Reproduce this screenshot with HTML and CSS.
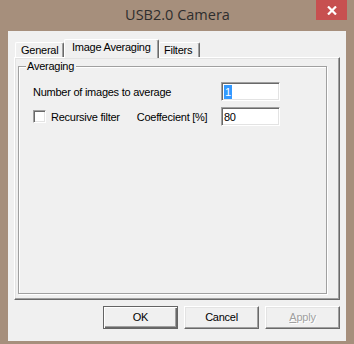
FILE: index.html
```html
<!DOCTYPE html>
<html lang="en">
<head>
  <meta charset="UTF-8" />
  <title>USB2.0 Camera</title>
  <link rel="stylesheet" href="styles.css">
</head>
<body>
  <div class="window">
    <div class="titlebar">
      <span></span>
      <div class="title">USB2.0 Camera</div>
      <div class="close">
        <svg width="10" height="9" viewBox="0 0 10 9">
          <path d="M1 0.5 L9 8.5 M9 0.5 L1 8.5" stroke="#fff" stroke-width="2.2" fill="none" />
        </svg>
      </div>
    </div>

    <div class="client">
      <div class="tabs">
        <div class="tab general">General</div>
        <div class="tab active">Image Averaging</div>
        <div class="tab filters">Filters</div>
      </div>

      <div class="panel">
        <div class="group">
          <div class="legend">Averaging</div>
          <div class="row">
            <span class="label">Number of images to average</span>
            <div class="edit"><span class="selected">1</span></div>
          </div>
          <div class="row">
            <span class="check"></span>
            <span class="label recursive">Recursive filter</span>
            <span class="label coef">Coeffecient [%]</span>
            <div class="edit">80</div>
          </div>
        </div>
      </div>

      <div class="buttons">
        <div class="btn default">OK</div>
        <div class="btn">Cancel</div>
        <div class="btn disabled"><u>A</u>pply</div>
      </div>
    </div>
  </div>
</body>
</html>
```

FILE: styles.css
```css
body {
  margin: 0;
  background: #a68f7c;
  font-family: 'Liberation Sans', Arial, sans-serif;
  font-size: 11px;
  letter-spacing: -0.25px;
  color: #000;
}
.window {
  width: 354px;
  height: 344px;
  display: flex;
  flex-direction: column;
}
.titlebar {
  height: 31px;
  display: grid;
  grid-template-columns: 1fr auto 1fr;
}
.title {
  font-family: 'Open Sans', sans-serif;
  font-size: 14.5px;
  letter-spacing: 0;
  color: #2e2e2e;
  line-height: 30px;
  padding-left: 1px;
}
.close {
  justify-self: end;
  margin-right: 7px;
  width: 31px;
  height: 20px;
  background: #c75050;
  display: flex;
  align-items: center;
  justify-content: center;
}
.client {
  flex: 1;
  margin: 0 8px 3px;
  background: #f0f0f0;
  padding: 8px 6px 0 6px;
  display: flex;
  flex-direction: column;
}
.tabs {
  display: flex;
  align-items: flex-end;
  height: 18px;
  padding-left: 1px;
  position: relative;
  z-index: 1;
}
.tab {
  background: #f0f0f0;
  border-top: 1px solid #fff;
  border-left: 1px solid #fff;
  border-right: 1px solid #696969;
  box-shadow: inset -1px 0 0 #a0a0a0;
  box-sizing: border-box;
  height: 15px;
  line-height: 15px;
  padding-left: 5px;
  border-radius: 2px 2px 0 0;
}
.general {
  width: 49px;
}
.active {
  width: 95px;
  height: 19px;
  margin-bottom: -1px;
  padding-left: 7px;
  line-height: 14px;
}
.filters {
  width: 41px;
  padding-left: 4px;
}
.panel {
  height: 243px;
  border-top: 1px solid #fff;
  border-left: 1px solid #fff;
  border-right: 1px solid #696969;
  border-bottom: 1px solid #696969;
  box-shadow: inset -1px -1px 0 #a0a0a0, inset 1px 1px 0 #e3e3e3;
  padding: 8px 12px 5px 3px;
  box-sizing: border-box;
}
.group {
  height: 100%;
  box-sizing: border-box;
  border: 1px solid #a0a0a0;
  box-shadow: 1px 1px 0 #fff, inset 1px 1px 0 #fff;
  padding: 15px 0 0 14px;
  display: flex;
  flex-direction: column;
  gap: 6px;
  position: relative;
}
.legend {
  position: absolute;
  top: -8px;
  left: 7px;
  padding: 0 2px 0 1px;
  background: #f0f0f0;
  line-height: 14px;
}
.row {
  display: flex;
  align-items: center;
  height: 19px;
}
.label {
  white-space: nowrap;
}
.row .edit {
  margin-left: auto;
  margin-right: 46px;
}
.edit {
  width: 59px;
  height: 19px;
  box-sizing: border-box;
  background: #fff;
  border-top: 1px solid #a0a0a0;
  border-left: 1px solid #a0a0a0;
  border-right: 1px solid #fff;
  border-bottom: 1px solid #fff;
  box-shadow: inset 1px 1px 0 #696969, inset -1px -1px 0 #e3e3e3;
  padding: 2px 0 0 2px;
  line-height: 14px;
}
.selected {
  background: #3399ff;
  color: #fff;
  display: inline-block;
  padding: 0 1px;
}
.check {
  width: 13px;
  height: 13px;
  box-sizing: border-box;
  background: #fff;
  border-top: 1px solid #a0a0a0;
  border-left: 1px solid #a0a0a0;
  border-right: 1px solid #fff;
  border-bottom: 1px solid #fff;
  box-shadow: inset 1px 1px 0 #696969, inset -1px -1px 0 #e3e3e3;
}
.recursive {
  margin-left: 5px;
}
.coef {
  margin-left: 17px;
}
.buttons {
  display: flex;
  justify-content: flex-end;
  gap: 6px;
  margin-top: 6px;
}
.btn {
  width: 75px;
  height: 23px;
  box-sizing: border-box;
  background: #f0f0f0;
  border-top: 1px solid #fff;
  border-left: 1px solid #fff;
  border-right: 1px solid #696969;
  border-bottom: 1px solid #696969;
  box-shadow: inset -1px -1px 0 #a0a0a0, inset 1px 1px 0 #e3e3e3;
  text-align: center;
  line-height: 21px;
}
.default {
  border: 1px solid #646464;
  box-shadow: inset 1px 1px 0 #fff, inset -1px -1px 0 #696969, inset -2px -2px 0 #a0a0a0;
}
.disabled {
  color: #a0a0a0;
  text-shadow: 1px 1px 0 #fff;
}
```
